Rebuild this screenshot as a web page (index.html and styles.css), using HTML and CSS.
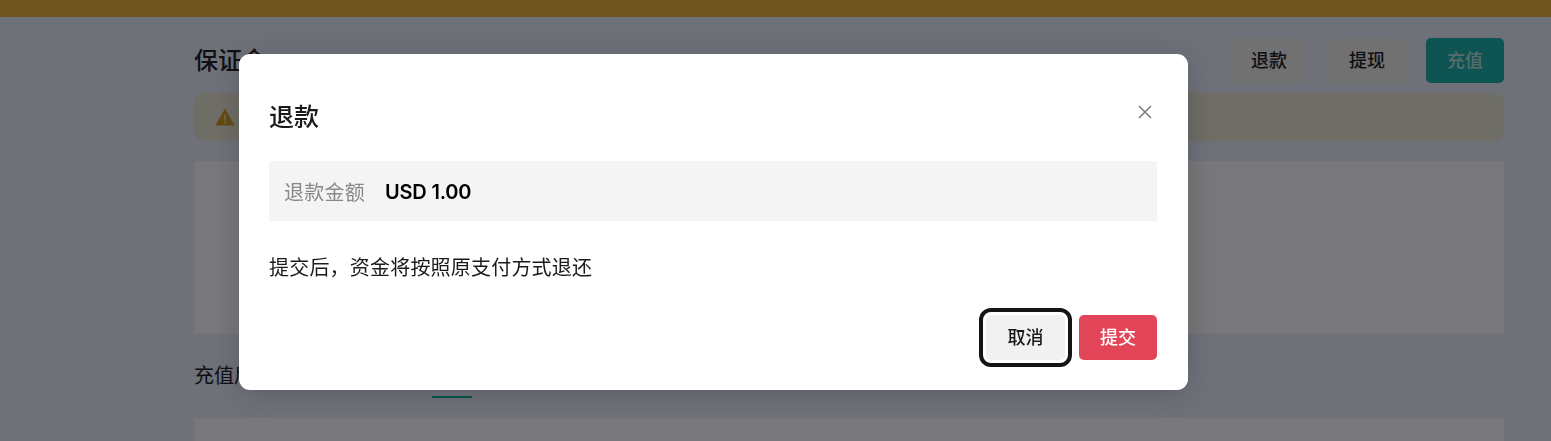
FILE: index.html
```html
<!DOCTYPE html>
<html lang="zh-CN">
<head>
<meta charset="utf-8">
<title>保证金</title>
<link rel="stylesheet" href="styles.css">
</head>
<body>
<div class="topbar"></div>
<main class="page">
  <header class="page-head">
    <h1 class="page-title">保证金</h1>
    <div class="actions">
      <button class="btn btn-muted">退款</button>
      <button class="btn btn-muted">提现</button>
      <button class="btn btn-teal">充值</button>
    </div>
  </header>
  <div class="alert">
    <svg class="alert-icon" viewBox="0 0 20 18" width="20" height="18" aria-hidden="true">
      <path class="tri" d="M10 .6 19.6 17.4H.4Z"/>
      <path class="mark" d="M9.1 6.5h1.8l-.3 6h-1.2ZM9.1 13.6h1.8v1.7H9.1Z"/>
    </svg>
  </div>
  <section class="panel"></section>
  <div class="section-head">
    <h2 class="section-title">充值后记录</h2>
    <div class="tab">记录</div>
  </div>
  <section class="panel panel-low"></section>
</main>

<div class="overlay">
  <div class="modal" role="dialog">
    <div class="modal-head">
      <h3 class="modal-title">退款</h3>
      <button class="close" aria-label="关闭">
        <svg viewBox="0 0 14 14" width="14" height="14" aria-hidden="true"><path d="M1 1l12 12M13 1 1 13"/></svg>
      </button>
    </div>
    <div class="amount">
      <span class="amount-label">退款金额</span>
      <span class="amount-value">USD 1.00</span>
    </div>
    <p class="note">提交后，资金将按照原支付方式退还</p>
    <div class="modal-foot">
      <button class="btn btn-cancel">取消</button>
      <button class="btn btn-danger">提交</button>
    </div>
  </div>
</div>
</body>
</html>
```
FILE: styles.css
```css
* { box-sizing: border-box; }
html, body { margin: 0; height: 441px; overflow: hidden; }
body {
  background: #dfe3f2;
  font-family: "Inter", "Noto Sans CJK SC", sans-serif;
  color: #1d2129;
}
h1, h2, h3, p { margin: 0; font-weight: 500; }
button { font: inherit; border: 0; cursor: pointer; }

.topbar { height: 17px; background: #dcaa40; }
.page { padding: 21px 47px 0 194px; }

.page-head { display: flex; justify-content: space-between; align-items: center; height: 45px; }
.page-title { font-size: 24px; line-height: 45px; }
.actions { display: flex; gap: 20px; }

.btn {
  width: 78px; height: 45px; padding: 0;
  border-radius: 5px;
  font-size: 18px; font-weight: 500; line-height: 45px;
  text-align: center;
}
.btn-muted { background: #e2e2e5; color: #1d2129; }
.btn-teal { background: #1aa8a6; color: #b0d8d4; }

.alert {
  display: flex; align-items: center;
  height: 48px; margin-top: 10px; padding-left: 21px;
  border-radius: 10px; background: #dcdacc;
}
.tri { fill: #c8962a; }
.mark { fill: #e8d8a8; }

.panel { height: 173px; margin-top: 20px; background: #f0f1f5; }

.section-head { display: flex; height: 64px; }
.section-title {
  width: 238px; margin-top: 21px;
  font-size: 20px; font-weight: 400; line-height: 42px;
  white-space: nowrap;
}
.tab {
  width: 40px; height: 44px; margin-top: 20px; padding-top: 4px;
  border-bottom: 2px solid #1aa8a0;
  font-size: 20px; line-height: 28px;
}
.panel-low { height: 23px; }

.overlay {
  position: fixed; inset: 0;
  display: flex; align-items: flex-start;
  padding: 54px 0 0 239px;
  background: rgba(0, 0, 0, .5);
}
.modal {
  width: 949px; height: 336px;
  padding: 45px 31px 0 30px;
  border-radius: 11px;
  background: #fff;
  box-shadow: 0 4px 30px rgba(0, 0, 0, .18);
}
.modal-head { display: flex; justify-content: space-between; align-items: flex-start; height: 62px; }
.modal-title { font-size: 25px; line-height: 36px; color: #1a1a1a; }
.close {
  display: flex; padding: 0; margin: 6px 5px 0 0;
  background: none;
}
.close path { fill: none; stroke: #7a7a7a; stroke-width: 1.5; }

.amount {
  display: flex; align-items: center; gap: 20px;
  height: 60px; padding: 1px 0 0 15px;
  background: #f4f4f4;
  font-size: 20px;
}
.amount-label { color: #888; font-weight: 400; letter-spacing: .25px; }
.amount-value { color: #000; font-weight: 600; letter-spacing: -.2px; }

.note { margin-top: 32px; font-size: 20px; line-height: 30px; font-weight: 400; letter-spacing: .2px; color: #1a1a1a; }

.modal-foot { display: flex; justify-content: flex-end; gap: 14px; margin-top: 32px; }
.btn-cancel {
  width: 79px;
  background: #f1f1f1; color: #1a1a1a;
  outline: 4px solid #151515; outline-offset: 3px;
}
.btn-danger { background: #e34558; color: #fff; }
```
